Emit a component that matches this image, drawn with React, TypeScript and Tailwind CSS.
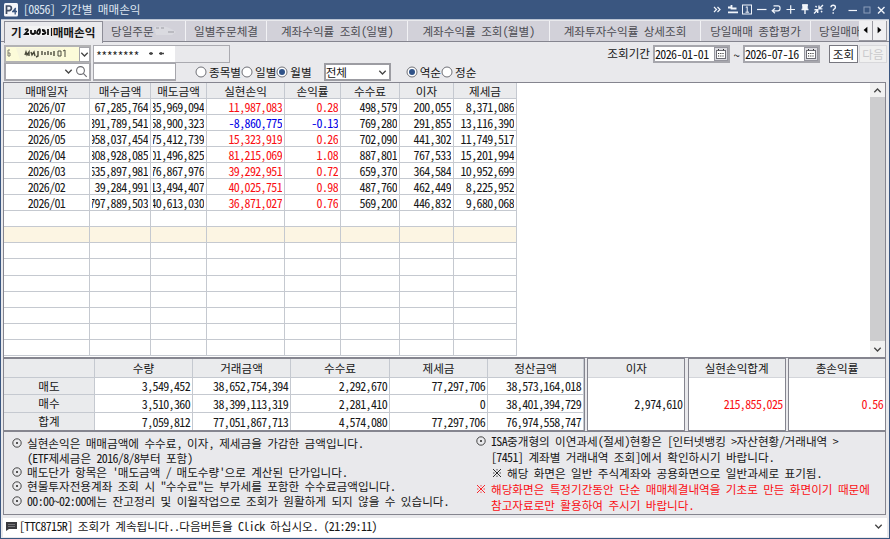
import type { ReactNode } from 'react';
import clsx from 'clsx';

// Hangul is full width, everything else is set on a half-width grid.
function T({ children }: { children: string }) {
  const runs = children.match(/[\u3131-\uD79D]+|[^\u3131-\uD79D]+/g) ?? [];
  return (
    <span className="block text-[12px] leading-[15px] whitespace-pre">
      {runs.map((run, i) =>
        /[\u3131-\uD79D]/.test(run) ? (
          <span key={i} className="text-[11.6px]">{run}</span>
        ) : (
          <span key={i} className="text-[12px] tracking-[-0.65px] [font-feature-settings:'hwid']">{run}</span>
        ),
      )}
    </span>
  );
}

const columns = [
  { label: '매매일자', width: 'w-[86px]' },
  { label: '매수금액', width: 'w-[61px]' },
  { label: '매도금액', width: 'w-[56px]' },
  { label: '실현손익', width: 'w-[78px]' },
  { label: '손익률', width: 'w-[56px]' },
  { label: '수수료', width: 'w-[59px]' },
  { label: '이자', width: 'w-[54px]' },
  { label: '제세금', width: 'w-[63px]' },
];

const rows = [
  ['2026/07', '67,285,764', '35,969,094', '11,987,083', '0.28', '498,579', '200,055', '8,371,086'],
  ['2026/06', '391,789,541', '58,900,323', '-8,860,775', '-0.13', '769,280', '291,855', '13,116,390'],
  ['2026/05', '958,037,454', '75,412,739', '15,323,919', '0.26', '702,090', '441,302', '11,749,517'],
  ['2026/04', '808,928,085', '01,496,825', '81,215,069', '1.08', '887,801', '767,533', '15,201,994'],
  ['2026/03', '635,897,981', '76,867,976', '39,292,951', '0.72', '659,370', '364,584', '10,952,699'],
  ['2026/02', '39,284,991', '13,494,407', '40,025,751', '0.98', '487,760', '462,449', '8,225,952'],
  ['2026/01', '797,889,503', '40,613,030', '36,871,027', '0.76', '569,200', '446,832', '9,680,068'],
];

const summaryHead = ['', '수량', '거래금액', '수수료', '제세금', '정산금액'];
const summaryWidths = ['w-[91px]', 'w-[98px]', 'w-[98px]', 'w-[99px]', 'w-[98px]', 'w-[96px]'];
const summaryHeights = ['h-[17px]', 'h-[18px]', 'h-[17px]'];
const summaryRows = [
  ['매도', '3,549,452', '38,652,754,394', '2,292,670', '77,297,706', '38,573,164,018'],
  ['매수', '3,510,360', '38,399,113,319', '2,281,410', '0', '38,401,394,729'],
  ['합계', '7,059,812', '77,051,867,713', '4,574,080', '77,297,706', '76,974,558,747'],
];

function TitleBar() {
  return (
    <header className="flex h-[19px] shrink-0 items-center bg-[#3a5680] pl-[3px] text-[#dfe6f0]">
      <svg width="15" height="14" viewBox="0 0 15 14" className="shrink-0">
        <rect width="14" height="13.5" rx="1.5" fill="#f4f6fa" />
        <path d="M2.5 11V3h2.6a2.2 2.2 0 0 1 0 4.6H2.5" fill="none" stroke="#3d4b63" strokeWidth="1.7" />
        <path d="M8.500 9.200l3.200-4.200M8 8.500h5M11.200 6v5.500" fill="none" stroke="#3a5680" strokeWidth="1.300" />
      </svg>
      <span className="mb-[2px] ml-[4px]"><T>[0856] 기간별 매매손익</T></span>
      <svg width="176" height="19" viewBox="0 0 176 19" className="ml-auto shrink-0" fill="none" stroke="#f1f5fb" strokeWidth="1.2">
        <path d="M1 7l2.5 2.5L1 12M4.500 7L7 9.500 4.500 12" />
        <path d="M15 7.500h3.500M18.500 5v4.500M18.500 8.500h5M15 12.300h10" strokeWidth="1.8" />
        <rect x="29.500" y="5" width="9" height="9" strokeWidth="1" />
        <path d="M32.800 7.500l1.400-.8v5.500M32.500 12.200h3.500" strokeWidth="1" />
        <path d="M44 9.500h9.500" />
        <path d="M60.500 5.800h4.500q2 0 2 2v1q0 2-2 2h-5.500M62 8.300l-2.800 2.500 2.800 2.500" />
        <path d="M73.500 9.500h8.500M77.700 5.300v8.500" />
        <path d="M89 5h6M90 8.800V5h4v3.800M88.500 9.500h7M92 9.500v4.500" strokeWidth="1.4" />
        <path d="M90.500 5h3v4h-3z" fill="#f1f5fb" />
        <path d="M101 13.500l3-3M101.500 9.800h3.200V13M110 5l-3.500 3.500M106 5.500v3.400h3.400M102.500 6l1.200 1.200M108 11l1.200 1.200" strokeWidth="1.400" />
        <path d="M118 7.300q0-2 2.200-2t2.200 1.900q0 1.300-1.300 1.900-.9.500-.9 1.700M120.200 12.300v1.500" strokeWidth="1.400" />
        <path d="M135.500 10.500h8.500" />
        <rect x="151" y="7" width="6" height="6" stroke="#8b9dba" strokeWidth="1" />
        <path d="M165 7l6.500 6.500M171.500 7l-6.500 6.500" strokeWidth="1.400" />
      </svg>
    </header>
  );
}

function Tab({ label, width }: { label: string; width: string }) {
  return (
    <div className={clsx('flex h-[20px] shrink-0 items-center justify-center border-r border-[#f2f2f5] bg-[#d2d1d9] text-[#4c4c52]', width)}>
      <T>{label}</T>
    </div>
  );
}

function Tabs() {
  return (
    <nav className="flex h-[22px] shrink-0 border-b border-[#85858f] bg-[#e9e9ec] pr-[2px] pl-[3px] pt-px">
      <div className="relative z-10 flex h-[22px] w-[99px] shrink-0 items-center border border-b-0 border-[#8d8d97] bg-[#eaeaed] pb-[2px] pl-[6px] font-bold">
        <T>기</T>
        <svg width="31" height="13" viewBox="0 0 31 13" fill="none" stroke="#111" strokeWidth="1.800">
          <path d="M2 1h27v10H4z" fill="#f3f3f3" stroke="none" />
          <path d="M3 5q3-2 3 .500l-3 3.500h4M9 5v3q2 2 4 0V5v4M16 5.500q-2 3 0 3.500t2-3-2-.500M20 5q4 0 2 1.500 3 1 0 2.500h-2M26 4v6" />
          <path d="M29.500 3v8" strokeWidth="1.200" />
        </svg>
        <T>매매손익</T>
      </div>
      <div className="flex h-[20px] w-[83px] shrink-0 items-center border-r border-[#f2f2f5] bg-[#d2d1d9] pl-[8px] text-[#4c4c52]">
        <T>당일주문</T>
        <svg width="25" height="14" viewBox="0 0 25 14">
          <path d="M0 3q12-3 22 5l-4 3H2z" fill="#dadae0" />
          <path d="M2 4h3M7 4h3M14 8h6" stroke="#9b9ba2" fill="none" />
        </svg>
      </div>
      <Tab label="일별주문체결" width="w-[81px]" />
      <Tab label="계좌수익률 조회(일별)" width="w-[141px]" />
      <Tab label="계좌수익률 조회(월별)" width="w-[142px]" />
      <Tab label="계좌투자수익률 상세조회" width="w-[151px]" />
      <Tab label="당일매매 종합평가" width="w-[110px]" />
      <div className="flex h-[20px] min-w-0 flex-1 items-center overflow-hidden bg-[#d2d1d9] pl-[8px] text-[#4c4c52]">
        <T>당일매매</T>
      </div>
      {['M9 6v7L5 9.500z', 'M5 6v7l4-3.500z'].map((d) => (
        <svg key={d} width="14" height="20" viewBox="0 0 14 20" className="shrink-0 border-r border-b border-[#9a9aa2] bg-[#f0f0f2]">
          <path d={d} fill="#000" />
        </svg>
      ))}
    </nav>
  );
}

function Chevron({ up = false }: { up?: boolean }) {
  return (
    <svg width="9" height="7" viewBox="0 0 9 7" fill="none" stroke="#444" strokeWidth="1.300" className={clsx('shrink-0', up && 'rotate-180')}>
      <path d="M1.300 1.800l3.200 3.200 3.200-3.200" />
    </svg>
  );
}

function Radio({ label, checked = false }: { label: string; checked?: boolean }) {
  return (
    <span className="flex items-center">
      <svg width="12" height="12" viewBox="0 0 12 12" className="mr-[2px]">
        <circle cx="6" cy="6" r="5" fill="#fff" stroke="#6f7076" />
        {checked && <circle cx="6" cy="6" r="3" fill="#2f5288" />}
      </svg>
      <T>{label}</T>
    </span>
  );
}

function DateField({ value }: { value: string }) {
  return (
    <span className="flex h-[18px] w-[77px] shrink-0 items-center border-2 border-[#a6a6ac] bg-white">
      <span className="mb-[2px]"><T>{value}</T></span>
      <svg width="14" height="14" viewBox="0 0 14 14" className="ml-auto bg-[#dcdce1]" fill="none" stroke="#6c6c74">
        <rect x=".5" y=".5" width="13" height="13" stroke="#96969e" />
        <rect x="2.500" y="3.500" width="9" height="8" fill="#fff" />
        <path d="M4.500 2v2M9.500 2v2M4 6.500h6M4 9h6" strokeDasharray="1.200 1" stroke="#333" />
      </svg>
    </span>
  );
}

function Filters() {
  return (
    <section className="h-[40px] shrink-0 pt-[3px] pl-[3px]">
      <div className="flex h-[18px] items-center">
        <div className="flex h-[18px] w-[87px] shrink-0 items-center border-2 border-[#b2b2b4] bg-[#fcfbd9]">
          <svg width="73" height="14" viewBox="0 0 73 14" fill="none" stroke="#4a4a3c" className="shrink-0">
            <path d="M10 1h44v12H14z" fill="#f6f5dc" stroke="none" />
            <path d="M4 3H2v3h2v3H2V6" stroke="#7e7e70" />
            <path d="M19 8l1-3 1 3 2-3v4M25 5l1 3 2-3 1 4M32 4v5l-2 1M36 4v4M39 5v3M42 4v4M45 5v3M48 4v5" strokeWidth="1.400" />
            <path d="M52 4v5h3V4zM57 4l2-1v7" />
          </svg>
          <span className="flex h-[15px] w-[11px] shrink-0 items-center justify-center border border-[#a5a5aa] bg-white"><Chevron /></span>
        </div>
        <div className="ml-[2px] flex h-[18px] w-[137px] shrink-0 items-center border border-[#aaaab0]">
          <div className="flex h-full w-[81px] items-center bg-white pl-[2px]">
            <span className="mt-[2px]"><T>********</T></span>
            <svg width="26" height="8" viewBox="0 0 26 8" className="ml-[6px]">
              <path d="M4 3.500h4M14 3.500h5M6 2v3M16 2v3" stroke="#444" fill="none" strokeWidth="1.500" />
            </svg>
          </div>
        </div>
        <span className="mb-[2px] ml-auto pr-[3px]"><T>조회기간</T></span>
        <DateField value="2026-01-01" />
        <span className="flex w-[13px] justify-center"><T>~</T></span>
        <DateField value="2026-07-16" />
        <span className="ml-[9px] flex h-[18px] w-[29px] items-center justify-center border border-[#77777f] bg-white pb-px"><T>조회</T></span>
        <span className="mr-[2px] ml-px flex h-[18px] w-[28px] items-center justify-center border border-[#d8d8db] bg-[#f0f0f0] pb-px text-[#c9c9cc]"><T>다음</T></span>
      </div>
      <div className="flex h-[18px] items-center">
        <div className="flex h-[18px] w-[87px] shrink-0 items-center justify-end border-2 border-t border-[#a6a6ac] bg-white pr-px">
          <Chevron />
          <svg width="13" height="13" viewBox="0 0 13 13" fill="none" stroke="#6b6b70" strokeWidth="1.100" className="ml-[2px]">
            <circle cx="5.500" cy="5.500" r="3.900" />
            <path d="M8.300 8.300l3.400 3.600" />
          </svg>
        </div>
        <div className="ml-[2px] h-[18px] w-[83px] shrink-0 border border-b-2 border-[#a6a6ac] bg-white" />
        <div className="ml-[19px] flex">
          <Radio label="종목별" />
          <Radio label="일별" />
          <Radio label="월별" checked />
        </div>
        <div className="ml-[12px] flex h-[18px] w-[67px] items-center justify-between border-2 border-[#9c9ca2] bg-white pr-[2px]">
          <T>전체</T>
          <Chevron />
        </div>
        <div className="ml-[15px] flex">
          <Radio label="역순" checked />
          <Radio label="정순" />
        </div>
      </div>
    </section>
  );
}

function tone(col: number, value?: string) {
  if (!value || (col !== 3 && col !== 4)) return '';
  return value.startsWith('-') ? 'text-[#0000e6]' : 'text-[#fa0f14]';
}

function TradeTable() {
  return (
    <section className="mx-[2px] flex h-[276px] w-[883px] shrink-0 border border-[#85858f] bg-white">
      <div className="w-[513px]">
        <div className="flex h-[16px] bg-[#eaebed]">
          {columns.map((c) => (
            <div key={c.label} className={clsx('flex items-center justify-center border-r border-b border-[#c5c9d0]', c.width)}>
              <T>{c.label}</T>
            </div>
          ))}
        </div>
        {Array.from({ length: 16 }, (_, r) => (
          <div key={r} className={clsx('flex h-[16.06px]', r === 8 && 'bg-[#fcf5e3]')}>
            {columns.map((c, i) => (
              <div key={c.label} className={clsx('border-r border-b border-[#c5c9d0] px-[2px]', c.width, tone(i, rows[r]?.[i]))}>
                <div className={clsx('flex h-full items-center overflow-x-clip', i === 0 ? 'justify-center' : 'justify-end')}>
                  {rows[r] && <T>{rows[r][i]}</T>}
                </div>
              </div>
            ))}
          </div>
        ))}
      </div>
      <div className="ml-auto flex w-[15px] flex-col items-center bg-[#f1f1f1]">
        <span className="flex h-[14px] items-center"><Chevron up /></span>
        <span className="w-full flex-1 bg-[#cdcdcf]" />
        <span className="flex h-[16px] items-center"><Chevron /></span>
      </div>
    </section>
  );
}

function TotalBox({ label, value, red = false }: { label: string; value: string; red?: boolean }) {
  return (
    <div className="w-[98px] border border-[#85858f] bg-white">
      <div className="flex h-[19px] items-center justify-center border-b border-[#d3d5da] bg-[#eaebed]"><T>{label}</T></div>
      <div className={clsx('flex h-[50px] items-center justify-end pr-[2px]', red && 'text-[#fa0f14]')}><T>{value}</T></div>
    </div>
  );
}

function Summary() {
  return (
    <section className="mx-[2px] flex h-[73px] w-[883px] shrink-0 justify-between">
      <div className="w-[582px] border border-[#85858f] bg-white">
        <div className="flex h-[19px] bg-[#eaebed]">
          {summaryHead.map((h, i) => (
            <div key={i} className={clsx('flex items-center justify-center border-r border-b border-[#c5c9d0]', summaryWidths[i])}>
              <T>{h}</T>
            </div>
          ))}
        </div>
        {summaryRows.map((row, r) => (
          <div key={row[0]} className={clsx('flex', summaryHeights[r])}>
            {row.map((v, i) => (
              <div
                key={i}
                className={clsx(
                  'flex items-center border-r border-[#c5c9d0] pb-px',
                  r < 2 && 'border-b',
                  i === 0 ? 'justify-center bg-[#eaebed]' : 'justify-end pr-[2px]',
                  summaryWidths[i],
                )}
              >
                <T>{v}</T>
              </div>
            ))}
          </div>
        ))}
      </div>
      <TotalBox label="이자" value="2,974,610" />
      <TotalBox label="실현손익합계" value="215,855,025" red />
      <TotalBox label="총손익률" value="0.56" red />
    </section>
  );
}

function Dot() {
  return (
    <svg width="10" height="10" viewBox="0 0 10 10">
      <circle cx="5" cy="5" r="4.200" fill="none" stroke="#333" strokeWidth=".9" />
      <circle cx="5" cy="5" r="1" fill="#222" />
    </svg>
  );
}

function Cross() {
  return (
    <svg width="10" height="10" viewBox="0 0 10 10" stroke="currentColor" strokeWidth=".9">
      <path d="M1 1l8 8M9 1L1 9M5 1.200v1.200M5 7.600v1.200M1.200 5h1.200M7.600 5h1.200" />
    </svg>
  );
}

function Note({ mark, children }: { mark?: ReactNode; children: string }) {
  return (
    <li className="flex min-h-0 flex-1 items-center">
      <span className="flex w-[15px] shrink-0">{mark}</span>
      <T>{children}</T>
    </li>
  );
}

function Notes() {
  return (
    <section className="mx-[2px] flex h-[84px] w-[883px] shrink-0 border border-[#85858f]">
      <ul className="mt-[4px] flex h-[72px] w-[464px] shrink-0 flex-col pl-[8px]">
        <Note mark={<Dot />}>실현손익은 매매금액에 수수료, 이자, 제세금을 가감한 금액입니다.</Note>
        <Note>(ETF제세금은 2016/8/8부터 포함)</Note>
        <Note mark={<Dot />}>매도단가 항목은 '매도금액 / 매도수량'으로 계산된 단가입니다.</Note>
        <Note mark={<Dot />}>현물투자전용계좌 조회 시 "수수료"는 부가세를 포함한 수수료금액입니다.</Note>
        <Note mark={<Dot />}>00:00~02:00에는 잔고정리 및 이월작업으로 조회가 원활하게 되지 않을 수 있습니다.</Note>
      </ul>
      <ul className="mt-px flex h-[80px] flex-col pl-[8px]">
        <Note mark={<Dot />}>ISA중개형의 이연과세(절세)현황은 [인터넷뱅킹 &gt;자산현황/거래내역 &gt;</Note>
        <Note>[7451] 계좌별 거래내역 조회]에서 확인하시기 바랍니다.</Note>
        <li className="flex min-h-0 flex-1 items-center pl-[16px]">
          <Cross />
          <span className="ml-[5px]"><T>해당 화면은 일반 주식계좌와 공용화면으로 일반과세로 표기됨.</T></span>
        </li>
        <li className="flex min-h-0 flex-1 items-center text-[#fa0f14]">
          <Cross />
          <span className="ml-[5px]"><T>해당화면은 특정기간동안 단순 매매체결내역을 기초로 만든 화면이기 때문에</T></span>
        </li>
        <li className="flex min-h-0 flex-1 items-center pl-[15px] text-[#fa0f14]"><T>참고자료로만 활용하여 주시기 바랍니다.</T></li>
      </ul>
    </section>
  );
}

export default function App() {
  return (
    <main className="flex h-[539px] w-[890px] flex-col overflow-hidden border border-t-0 border-[#3a5680] bg-[#e9e9ec] font-['Noto_Sans_CJK_KR',sans-serif] text-[12px] leading-none text-[#161616]">
      <TitleBar />
      <div className="h-px shrink-0 bg-[#b9c3d3]" />
      <Tabs />
      <Filters />
      <TradeTable />
      <Summary />
      <Notes />
      <footer className="mx-[2px] mt-[3px] flex h-[19px] shrink-0 items-center bg-white pb-[3px]">
        <svg width="12" height="10" viewBox="0 0 12 10" className="ml-[2px]">
          <path d="M1 1h11v7H4L1 10z" fill="#3a3a3e" />
          <path d="M3 3.500h7M3 5.500h7" stroke="#85858a" strokeWidth=".8" />
        </svg>
        <span className="ml-[2px]"><T>[TTC8715R] 조회가 계속됩니다..다음버튼을 Click 하십시오. (21:29:11)</T></span>
        <span className="mr-[4px] ml-auto"><Chevron /></span>
      </footer>
    </main>
  );
}
